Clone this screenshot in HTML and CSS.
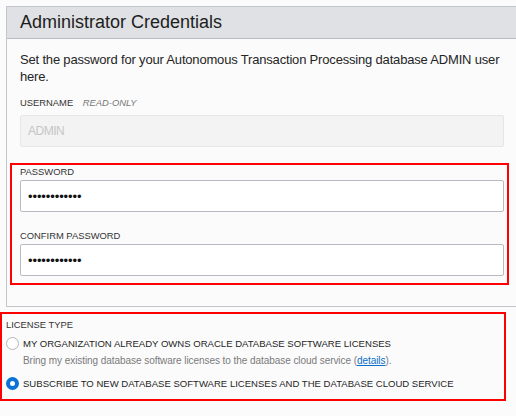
FILE: index.html
```html
<!DOCTYPE html>
<html>
<head>
<meta charset="utf-8">
<link rel="stylesheet" href="styles.css">
</head>
<body>
<section class="panel">
  <header class="panel-header">Administrator Credentials</header>
  <div class="panel-body">
    <p class="intro">Set the password for your Autonomous Transaction Processing database ADMIN user here.</p>
    <div class="field user-field">
      <div class="label">USERNAME <span class="ro">READ-ONLY</span></div>
      <div class="input readonly">ADMIN</div>
    </div>
    <div class="highlight pw-box">
      <div class="field">
        <div class="label">PASSWORD</div>
        <div class="input pw"><span class="dots">••••••••••••</span></div>
      </div>
      <div class="field">
        <div class="label">CONFIRM PASSWORD</div>
        <div class="input pw"><span class="dots">••••••••••••</span></div>
      </div>
    </div>
  </div>
</section>
<div class="highlight license">
  <div class="label">LICENSE TYPE</div>
  <div class="option">
    <span class="radio"></span>
    <span class="opt-text">MY ORGANIZATION ALREADY OWNS ORACLE DATABASE SOFTWARE LICENSES</span>
  </div>
  <div class="desc">Bring my existing database software licenses to the database cloud service (<a href="#">details</a>).</div>
  <div class="option second">
    <span class="radio checked"></span>
    <span class="opt-text">SUBSCRIBE TO NEW DATABASE SOFTWARE LICENSES AND THE DATABASE CLOUD SERVICE</span>
  </div>
</div>
</body>
</html>
```
FILE: styles.css
```css
html, body {
  margin: 0;
  padding: 0;
  background: #fbfbfb;
  font-family: "Liberation Sans", Arial, sans-serif;
  color: #252525;
}
.panel {
  margin: 6px 0 0 6px;
  border: 1px solid #c3c6cb;
  border-right: none;
  background: #fbfbfb;
}
.panel-header {
  height: 31px;
  line-height: 31px;
  background: #dfe1e4;
  border-bottom: 1px solid #b8bcc2;
  padding-left: 13px;
  font-size: 18px;
  color: #1d1d1d;
}
.panel-body {
  padding: 12px 12px 21px 13px;
}
.intro {
  margin: 0 0 12px 0;
  font-size: 13px;
  line-height: 17px;
  letter-spacing: -0.18px;
  width: 492px;
}
.label {
  font-size: 9.4px;
  line-height: 12px;
  color: #333;
}
.ro {
  font-style: italic;
  color: #767676;
  margin-left: 7px;
}
.user-field .label {
  margin-bottom: 6px;
}
.pw-box .label {
  margin-bottom: 2px;
}
.input {
  box-sizing: border-box;
  height: 32px;
  width: 484px;
  border: 1px solid #b8bcc2;
  border-radius: 2px;
  background: #fff;
  display: flex;
  align-items: center;
  padding-left: 7px;
}
.input.readonly {
  background: #f3f3f3;
  border-color: #e6e6e6;
  color: #c6c6c6;
  font-size: 12px;
  letter-spacing: -0.5px;
}
.dots {
  font-size: 13px;
  letter-spacing: -0.1px;
  color: #111;
}
.highlight {
  border: 2px solid #ff0000;
}
.pw-box {
  margin: 16px 0 0 -10px;
  width: 484px;
  padding: 1px 3px 7px 8px;
}
.pw-box .field + .field {
  margin-top: 18px;
}
.license {
  margin-top: 5px;
  width: 506px;
  box-sizing: border-box;
  height: 89px;
  padding: 5px 0 0 4px;
}
.option {
  display: flex;
  align-items: center;
  margin-top: 6px;
  height: 13px;
}
.option.second {
  margin-top: 10px;
}
.radio {
  box-sizing: border-box;
  width: 13px;
  height: 13px;
  border-radius: 50%;
  border: 1px solid #b3b6ba;
  background: #fff;
  margin-right: 4px;
  flex: none;
}
.radio.checked {
  border: 4.5px solid #0a72d6;
  background: #fff;
}
.opt-text {
  font-size: 9.55px;
  line-height: 12px;
  color: #252525;
}
.desc {
  margin: 5px 0 0 17px;
  font-size: 10px;
  line-height: 12px;
  letter-spacing: -0.06px;
  color: #7a7a7a;
}
.desc a {
  color: #0a6fc9;
}
```
